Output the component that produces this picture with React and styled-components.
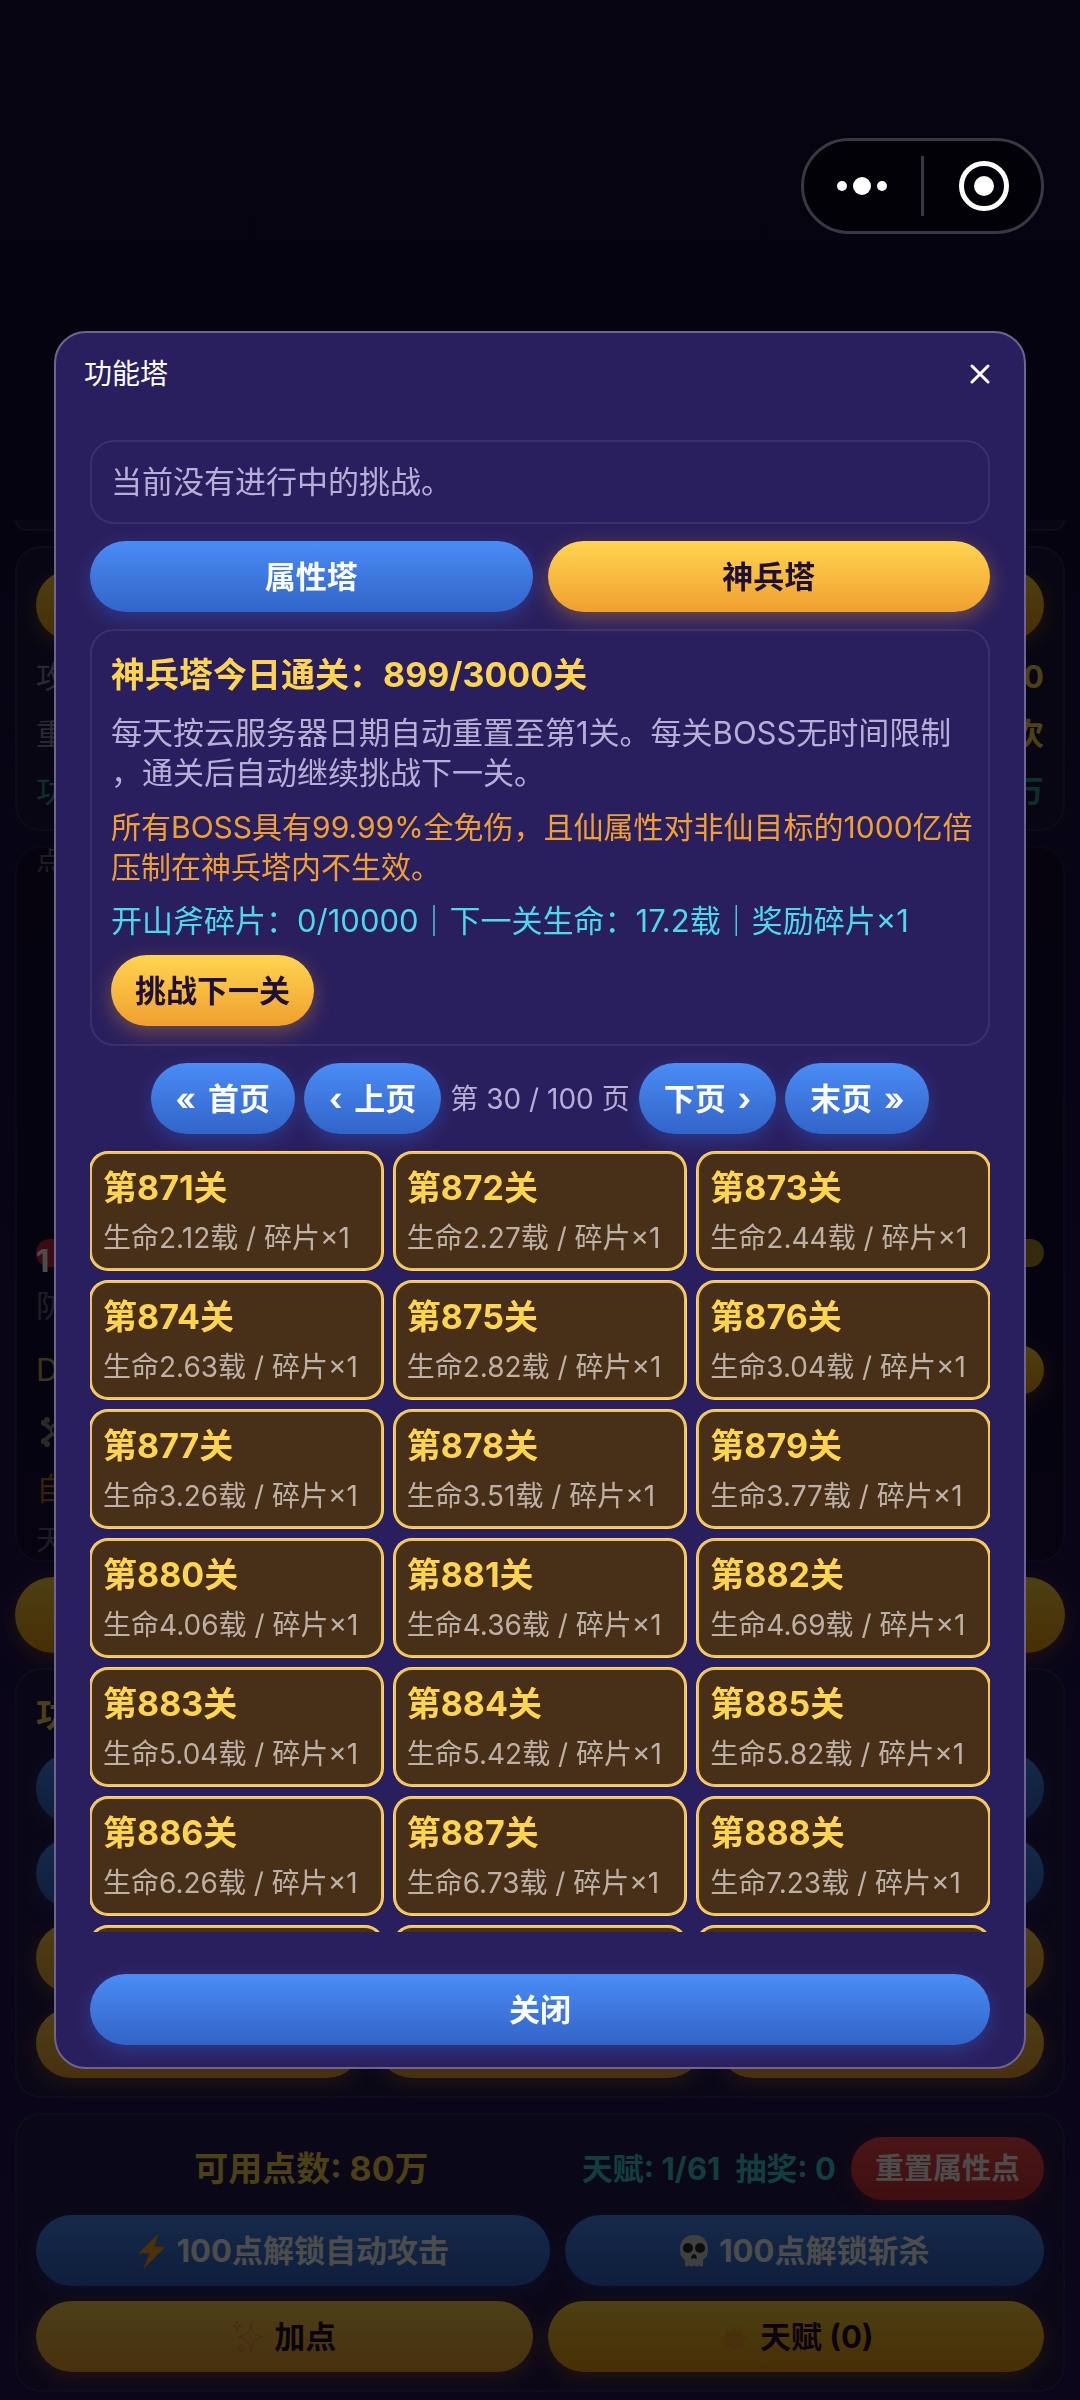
import React, { useState } from 'react';
import styled, { createGlobalStyle, css } from 'styled-components';

const GlobalStyle = createGlobalStyle`
  * {
    box-sizing: border-box;
  }
  body {
    margin: 0;
    background: #28145a;
    color: #fff;
    font-family: Inter, 'Noto Sans CJK SC', sans-serif;
    font-size: 31px;
    line-height: 40px;
  }
  button {
    font-family: inherit;
    cursor: pointer;
  }
`;

const blue = css`
  color: #fff;
  background: linear-gradient(180deg, #4a8cf6 0%, #3264c8 100%);
  box-shadow: 0 6px 20px rgba(60, 120, 240, 0.3);
`;

const gold = css`
  color: #1f1038;
  background: linear-gradient(180deg, #ffd54f 0%, #f0a030 100%);
  box-shadow: 0 6px 20px rgba(240, 160, 48, 0.35);
`;

const amber = css`
  color: #1f1038;
  background: linear-gradient(180deg, #ffd83c 0%, #f09a14 100%);
  box-shadow: 0 6px 20px rgba(240, 160, 20, 0.35);
`;

const red = css`
  color: #fff;
  background: linear-gradient(180deg, #f5484c 0%, #d23438 100%);
  box-shadow: 0 6px 20px rgba(240, 60, 60, 0.35);
`;

const variants = { blue, gold, amber, red };

const Button = styled.button`
  display: flex;
  align-items: center;
  justify-content: center;
  gap: 10px;
  height: ${(props) => (props.$small ? '63px' : '71px')};
  padding: 0 24px;
  border: none;
  border-radius: 36px;
  font-size: ${(props) => (props.$small ? '29px' : '31px')};
  font-weight: 700;
  line-height: 40px;
  white-space: nowrap;
  ${(props) => variants[props.$variant || 'blue']}
`;

/* ---------- page behind the dialog ---------- */

const Page = styled.div`
  min-height: 100vh;
  padding: 0 15px 8px;
  background: linear-gradient(180deg, #140e36 0%, #150d3a 22%, #1c1048 45%, #28145a 100%);
`;

const TopBar = styled.header`
  height: 520px;
  padding: 138px 21px 0 0;
  display: flex;
  justify-content: flex-end;
  align-items: flex-start;
`;

const Capsule = styled.div`
  position: relative;
  z-index: 20;
  display: flex;
  align-items: center;
  width: 243px;
  height: 96px;
  border: 3px solid #3a3743;
  border-radius: 48px;
  background: #020108;
`;

const CapsuleButton = styled.button`
  flex: 1;
  height: 100%;
  padding: 0;
  border: none;
  background: none;
  display: flex;
  align-items: center;
  justify-content: center;
`;

const CapsuleDivider = styled.span`
  width: 3px;
  height: 60px;
  background: #3a3743;
`;

const Main = styled.main`
  display: flex;
  flex-direction: column;
  gap: 15px;
`;

const Panel = styled.section`
  display: flex;
  flex-direction: column;
  gap: 15px;
  padding: 22px 19px 18px;
  border: 2px solid rgba(255, 255, 255, 0.08);
  border-radius: 26px;
  background: ${(props) => (props.$dark ? 'rgba(12, 6, 32, 0.4)' : 'rgba(34, 32, 66, 0.45)')};
`;

const PanelTail = styled(Panel)`
  height: 11px;
  padding: 0;
  border-top: none;
  border-radius: 0 0 26px 26px;
  background: rgba(255, 255, 255, 0.04);
`;

const StatList = styled.dl`
  margin: 0;
  padding: 2px 0 0;
  display: flex;
  flex-direction: column;
  gap: 17px;
`;

const StatRow = styled.div`
  display: flex;
  justify-content: space-between;
  color: ${(props) => props.$color || '#8d86a0'};

  dt,
  dd {
    margin: 0;
  }
  dd {
    color: ${(props) => props.$valueColor || '#ffd54f'};
    font-weight: 700;
  }
`;

const BattlePanel = styled(Panel)`
  height: 716px;
  padding-top: 0;
  padding-bottom: 8px;
  gap: 0;
  justify-content: space-between;
  overflow: hidden;
`;

const LogText = styled.p`
  margin: 0;
  color: ${(props) => props.$color || '#66607a'};
  font-size: ${(props) => (props.$muted ? '28px' : '31px')};
  line-height: ${(props) => (props.$muted ? '24px' : '40px')};
`;

const BattleInfo = styled.div`
  display: flex;
  flex-direction: column;
  gap: 19px;
`;

const HealthBar = styled.div`
  height: 28px;
  border-radius: 14px;
  background: linear-gradient(90deg, #c8283c 0%, #d83c3c 30%, #b48c28 70%);
  color: #fff;
  font-weight: 700;
  line-height: 44px;
`;

const LootRow = styled.div`
  display: flex;
  align-items: center;
  justify-content: space-between;
  color: #c8aa50;
`;

const LootButton = styled(Button)`
  height: 50px;
  min-width: 90px;
`;

const AutoButton = styled(Button)`
  height: 76px;
  border-radius: 38px;
`;

const PanelTitle = styled.h2`
  margin: 0;
  color: #ffd54f;
  font-size: 34px;
  line-height: 46px;
`;

const FeatureGrid = styled.div`
  display: grid;
  grid-template-columns: repeat(3, 1fr);
  gap: 15px;
`;

const FeatureButton = styled(Button)`
  height: 70px;
`;

const PointsRow = styled.div`
  display: flex;
  align-items: center;
  gap: 15px;
`;

const Points = styled.strong`
  flex: 1;
  padding-left: 20px;
  text-align: center;
  color: #ffd54f;
  font-size: 34px;
`;

const Talent = styled.strong`
  color: #3ccfcf;
`;

const ButtonRow = styled.div`
  display: grid;
  grid-template-columns: ${(props) => props.$columns || '1fr 1fr'};
  gap: 15px;
`;

/* ---------- dialog ---------- */

const Overlay = styled.div`
  position: fixed;
  inset: 0;
  z-index: 10;
  display: flex;
  align-items: center;
  justify-content: center;
  background: rgba(0, 0, 0, 0.7);
`;

const Dialog = styled.div`
  width: 90%;
  border: 2px solid #6d6590;
  border-radius: 32px;
  background: #2a1f5e;
`;

const DialogHeader = styled.header`
  display: flex;
  align-items: center;
  justify-content: space-between;
  padding: 20px 30px 20px 28px;
`;

const DialogTitle = styled.h1`
  margin: 0;
  font-size: 28px;
  font-weight: 400;
  line-height: 42px;
`;

const CloseIcon = styled.button`
  display: flex;
  padding: 4px;
  border: none;
  background: none;
  color: #fff;
`;

const DialogBody = styled.div`
  display: flex;
  flex-direction: column;
  gap: 17px;
  padding: 25px 34px 42px;
`;

const DialogFooter = styled.footer`
  display: grid;
  padding: 0 34px 22px;
`;

const Box = styled.section`
  display: flex;
  flex-direction: column;
  align-items: flex-start;
  gap: 14px;
  padding: 20px 19px 18px;
  border: 2px solid rgba(255, 255, 255, 0.08);
  border-radius: 24px;
`;

const StatusBox = styled(Box)`
  padding: 20px 19px;
  color: #b9aed6;
`;

const BoxTitle = styled.h2`
  margin: 0;
  color: #ffd54f;
  font-size: 34px;
  font-weight: 700;
  line-height: 48px;
`;

const Text = styled.p`
  margin: 0;
  color: ${(props) => props.$color || '#b9aed6'};
  font-size: ${(props) => props.$size || '31px'};
  white-space: nowrap;
`;

const Pager = styled.nav`
  display: flex;
  align-items: center;
  justify-content: center;
  gap: 9px;
`;

const PagerButton = styled(Button)`
  padding: 0 25px;
  gap: 12px;
`;

const PageLabel = styled.span`
  color: #b9aed6;
  font-size: 28px;
  white-space: nowrap;
`;

const FloorList = styled.ul`
  display: grid;
  grid-template-columns: repeat(3, 1fr);
  gap: 11px;
  height: 781px;
  margin: 0;
  padding: 1px 0 0;
  list-style: none;
  overflow-y: auto;
  scrollbar-width: none;
`;

const Floor = styled.li`
  display: flex;
  flex-direction: column;
  gap: 8px;
  height: 118px;
  padding: 12px 11px;
  border: 2px solid #f0c458;
  border-radius: 18px;
  background: #483018;
  box-shadow: 0 0 0 1px #ffd870;
`;

const FloorName = styled.strong`
  color: #ffd54f;
  font-size: 34px;
  line-height: 44px;
`;

const FloorInfo = styled.span`
  color: #bdb0a6;
  font-size: 28px;
  white-space: nowrap;
`;

const BoltIcon = () => (
  <svg width="30" height="36" viewBox="0 0 30 36" aria-hidden="true">
    <path d="M21 1 2 20h11L7 35 28 14H17z" fill="#ffa726" stroke="#e08a1a" strokeWidth="1" />
  </svg>
);

const SkullIcon = () => (
  <svg width="30" height="34" viewBox="0 0 30 34" aria-hidden="true">
    <path
      d="M15 1C6 1 1 7 1 15c0 5 1 8 4 10l1 1v5c0 2 3 2 4 0 1 2 4 2 5 0 1 2 4 2 5 0 1 2 4 2 4 0v-5l1-1c3-2 4-5 4-10C29 7 24 1 15 1z"
      fill="#d8d8d8"
    />
    <circle cx="9" cy="14" r="5" fill="#2a2a2a" />
    <circle cx="21" cy="14" r="5" fill="#2a2a2a" />
    <path d="M15 20c-2 0-4 5-2 5l2-1 2 1c2 0 0-5-2-5z" fill="#2a2a2a" />
  </svg>
);

const CrossbonesIcon = () => (
  <svg width="36" height="36" viewBox="0 0 36 36" aria-hidden="true">
    <path d="M7 8 29 28M29 8 7 28" stroke="#8c8c8c" strokeWidth="4" strokeLinecap="round" />
    <g fill="#8c8c8c">
      <circle cx="8" cy="9" r="3" />
      <circle cx="11" cy="6" r="3" />
      <circle cx="8" cy="27" r="3" />
      <circle cx="11" cy="30" r="3" />
      <circle cx="22" cy="16" r="8" />
      <path d="M18 20h9v8h-9z" />
    </g>
    <circle cx="19" cy="16" r="3" fill="#222" />
    <circle cx="25" cy="16" r="3" fill="#222" />
  </svg>
);

const SparklesIcon = () => (
  <svg width="32" height="34" viewBox="0 0 32 34" aria-hidden="true">
    <g fill="#ffb050" fillOpacity="0.3" stroke="#e07a30" strokeOpacity="0.7" strokeWidth="1">
      <path d="M19 3c1 10 3 12 12 14-9 2-11 5-12 15C18 22 15 19 6 17c9-2 12-4 13-14z" />
      <path d="M5 1c0 3 1 4 4 5-3 1-4 2-4 5 0-3-1-4-4-5 3-1 4-2 4-5z" />
      <path d="M9 24c0 3 1 3 4 4-3 1-4 2-4 5 0-3-1-4-4-5 3-1 4-1 4-4z" />
    </g>
  </svg>
);

const StarIcon = () => (
  <svg width="32" height="36" viewBox="0 0 32 36" aria-hidden="true">
    <path
      d="m16 8 3 4 5-1v5l5 3-4 4v5h-5l-4 3-4-3H7v-5l-4-4 5-3v-5l5 1z"
      fill="#f08a28"
      fillOpacity="0.5"
    />
    <path
      d="M16 35v-4M8 3l3 5M24 3l-3 5M1 22l4-1M31 22l-4-1"
      stroke="#f0b04c"
      strokeWidth="1"
      strokeLinecap="round"
    />
  </svg>
);

const FIRST_FLOOR = 871;
const hpList = [
  '2.12', '2.27', '2.44',
  '2.63', '2.82', '3.04',
  '3.26', '3.51', '3.77',
  '4.06', '4.36', '4.69',
  '5.04', '5.42', '5.82',
  '6.26', '6.73', '7.23',
  '7.77', '8.35', '8.97',
];

const floors = hpList.map((hp, i) => ({ id: FIRST_FLOOR + i, hp }));

const featureVariants = [
  'blue', 'blue', 'blue',
  'blue', 'blue', 'blue',
  'gold', 'gold', 'gold',
  'gold', 'gold', 'gold',
];

function TowerDialog({ onClose }) {
  return (
    <Overlay>
      <Dialog role="dialog" aria-modal="true" aria-labelledby="tower-title">
        <DialogHeader>
          <DialogTitle id="tower-title">功能塔</DialogTitle>
          <CloseIcon type="button" aria-label="关闭弹窗" onClick={onClose}>
            <svg width="20" height="20" viewBox="0 0 20 20" aria-hidden="true">
              <path d="M2 2 18 18M18 2 2 18" stroke="currentColor" strokeWidth="3" strokeLinecap="round" />
            </svg>
          </CloseIcon>
        </DialogHeader>
        <DialogBody>
          <StatusBox>当前没有进行中的挑战。</StatusBox>
          <ButtonRow>
            <Button type="button">属性塔</Button>
            <Button type="button" $variant="gold">神兵塔</Button>
          </ButtonRow>
          <Box>
            <BoxTitle>神兵塔今日通关：899/3000关</BoxTitle>
            <Text>
              每天按云服务器日期自动重置至第1关。每关BOSS无时间限制
              <br />
              ，通关后自动继续挑战下一关。
            </Text>
            <Text $color="#f0a030" $size="30px">
              所有BOSS具有99.99%全免伤，且仙属性对非仙目标的1000亿倍
              <br />
              压制在神兵塔内不生效。
            </Text>
            <Text $color="#4dd9ec">开山斧碎片：0/10000｜下一关生命：17.2载｜奖励碎片×1</Text>
            <Button type="button" $variant="gold">挑战下一关</Button>
          </Box>
          <Pager aria-label="分页">
            <PagerButton type="button"><span>«</span>首页</PagerButton>
            <PagerButton type="button"><span>‹</span>上页</PagerButton>
            <PageLabel>第 30 / 100 页</PageLabel>
            <PagerButton type="button">下页<span>›</span></PagerButton>
            <PagerButton type="button">末页<span>»</span></PagerButton>
          </Pager>
          <FloorList>
            {floors.map((floor) => (
              <Floor key={floor.id}>
                <FloorName>第{floor.id}关</FloorName>
                <FloorInfo>生命{floor.hp}载 / 碎片×1</FloorInfo>
              </Floor>
            ))}
          </FloorList>
        </DialogBody>
        <DialogFooter>
          <Button type="button" onClick={onClose}>关闭</Button>
        </DialogFooter>
      </Dialog>
    </Overlay>
  );
}

export default function App() {
  const [open, setOpen] = useState(true);

  return (
    <>
      <GlobalStyle />
      <Page lang="zh-CN">
        <TopBar>
          <Capsule>
            <CapsuleButton type="button" aria-label="更多">
              <svg width="52" height="18" viewBox="0 0 52 18" aria-hidden="true">
                <circle cx="5" cy="9" r="5" fill="#fff" />
                <circle cx="25" cy="9" r="9" fill="#fff" />
                <circle cx="45" cy="9" r="5" fill="#fff" />
              </svg>
            </CapsuleButton>
            <CapsuleDivider />
            <CapsuleButton type="button" aria-label="退出">
              <svg width="52" height="50" viewBox="0 0 52 50" aria-hidden="true">
                <circle cx="27" cy="25" r="22.5" fill="none" stroke="#fff" strokeWidth="5" />
                <circle cx="27" cy="25" r="10" fill="#fff" />
              </svg>
            </CapsuleButton>
          </Capsule>
        </TopBar>

        <Main>
          <PanelTail />
          <Panel>
            <FeatureButton type="button" $variant="amber" aria-label="挑战" onClick={() => setOpen(true)} />
            <StatList>
              <StatRow>
                <dt>攻</dt>
                <dd>0</dd>
              </StatRow>
              <StatRow>
                <dt>重</dt>
                <dd>次</dd>
              </StatRow>
              <StatRow $color="#28a08c" $valueColor="#28a08c">
                <dt>功</dt>
                <dd>万</dd>
              </StatRow>
            </StatList>
          </Panel>

          <BattlePanel $dark>
            <LogText $muted>点</LogText>
            <BattleInfo>
              <HealthBar>1</HealthBar>
              <LogText>防</LogText>
              <LootRow>
                <span>D</span>
                <LootButton type="button" $variant="amber" aria-label="拾取" />
              </LootRow>
              <CrossbonesIcon />
              <LogText $color="#b4701e">自</LogText>
              <LogText $muted>天</LogText>
            </BattleInfo>
          </BattlePanel>

          <AutoButton type="button" $variant="amber" aria-label="自动" />

          <Panel>
            <PanelTitle>功</PanelTitle>
            <FeatureGrid>
              {featureVariants.map((variant, i) => (
                <FeatureButton key={i} type="button" $variant={variant} aria-label={`功能${i + 1}`} />
              ))}
            </FeatureGrid>
          </Panel>

          <Panel>
            <PointsRow>
              <Points>可用点数: 80万</Points>
              <Talent>天赋: 1/61</Talent>
              <Talent>抽奖: 0</Talent>
              <Button type="button" $variant="red" $small>重置属性点</Button>
            </PointsRow>
            <ButtonRow $columns="15fr 14fr">
              <Button type="button"><BoltIcon />100点解锁自动攻击</Button>
              <Button type="button"><SkullIcon />100点解锁斩杀</Button>
            </ButtonRow>
            <ButtonRow>
              <Button type="button" $variant="gold"><SparklesIcon />加点</Button>
              <Button type="button" $variant="amber"><StarIcon />天赋 (0)</Button>
            </ButtonRow>
          </Panel>
        </Main>
      </Page>
      {open && <TowerDialog onClose={() => setOpen(false)} />}
    </>
  );
}
